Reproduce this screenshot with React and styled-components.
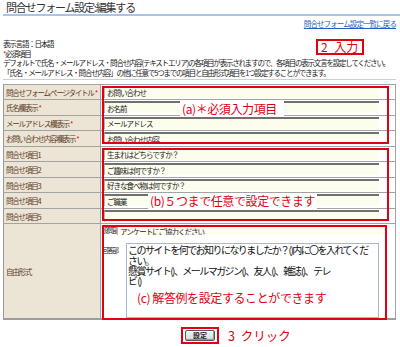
import React from 'react'
import styled, { createGlobalStyle } from 'styled-components'

const GlobalStyle = createGlobalStyle`
  html, body {
    margin: 0;
    padding: 0;
    background: #fff;
  }
  body {
    font-family: "Noto Sans CJK JP", "Noto Sans", sans-serif;
    color: #222;
  }
`

const Page = styled.div`
  position: relative;
  width: 400px;
  height: 347px;
  overflow: hidden;
`

const Header = styled.div`
  margin-left: 3px;
  padding-left: 3px;
  height: 14px;
  border-bottom: 2px solid #a9c4ea;
`

const Title = styled.h1`
  margin: 0;
  font-size: 11px;
  font-weight: normal;
  line-height: 14px;
  letter-spacing: -1.2px;
  color: #333;
`

const LinkRow = styled.div`
  margin-top: 3px;
  padding-right: 4px;
  height: 10px;
  text-align: right;
  font-size: 7.5px;
  line-height: 10px;
`

const BackLink = styled.a`
  letter-spacing: -0.9px;
  color: #2a5bc4;
  text-decoration: underline;
`

const Intro = styled.div`
  margin-top: 10px;
  padding-left: 3px;
`

const Line = styled.div`
  height: 9.7px;
  font-size: 7.5px;
  line-height: 9.7px;
  letter-spacing: -1.2px;
  white-space: nowrap;
  color: #222;
`

const Req = styled.span`
  color: #e00;
`

const Table = styled.div`
  margin: 1px 4px 0 3px;
  padding-top: 4px;
  border-top: 1px solid #cfcfcf;
`

const Row = styled.div`
  display: grid;
  grid-template-columns: 98px 1fr;
  height: ${p => p.$tall ? '97px' : '15.5px'};
  box-sizing: border-box;
  border-top: 1px solid #a3a3a3;
  border-right: 1px solid #a3a3a3;
  border-bottom: ${p => p.$last ? '2px solid #9c9c9c' : 'none'};
`

const Label = styled.div`
  display: flex;
  align-items: center;
  padding-left: 2px;
  background: #ece5d6;
  border-left: 1px solid #999;
  border-right: 1px solid #a3a3a3;
  font-size: 7.5px;
  letter-spacing: -1.2px;
  color: #5b3a1f;
  white-space: nowrap;
`

const Star = styled.span`
  color: #e00;
  margin-left: 1px;
`

const Value = styled.div`
  display: flex;
  align-items: flex-start;
  padding: 1px 0 0 3px;
`

const Field = styled.input`
  box-sizing: border-box;
  width: ${p => p.$w || 275}px;
  height: ${p => p.$h || 12}px;
  margin: 0;
  padding: 0 2px;
  border: none;
  border-top: 2px solid #707070;
  border-left: 1px solid #b5b5b5;
  background: #fdfdee;
  font-family: inherit;
  font-size: 7.5px;
  letter-spacing: -1px;
  color: #222;
  outline: none;
`

const FreeCell = styled.div`
  display: flex;
  flex-direction: column;
  padding: 1px 0 0 1px;
`

const SubRow = styled.div`
  display: flex;
  align-items: flex-start;
  margin-top: ${p => p.$gap || 0}px;
`

const SubLabel = styled.span`
  width: ${p => p.$w}px;
  padding-top: ${p => p.$pt || 0}px;
  font-size: 6.5px;
  letter-spacing: -1.2px;
  line-height: 10px;
  color: #222;
  white-space: nowrap;
`

const AnswerBox = styled.div`
  box-sizing: border-box;
  width: 253px;
  height: 75px;
  padding: 1px 1px;
  border: 1px solid #a7b9d0;
  background: #fff;
  font-size: 10px;
  line-height: 10.3px;
  letter-spacing: -1.55px;
  color: #111;
  white-space: nowrap;
  overflow: hidden;
`

const AnswerLine = styled.div`
  height: 10.3px;
`

const Footer = styled.div`
  display: grid;
  grid-template-columns: 1fr auto 1fr;
  align-items: center;
  margin-top: 7px;
`

const ButtonFrame = styled.div`
  grid-column: 2;
  display: flex;
  padding: 1px 2px;
  border: 2px solid #e0000f;
`

const SubmitButton = styled.button`
  width: 30px;
  height: 11px;
  padding: 0;
  border: 1px solid #5a5a5a;
  border-radius: 2px;
  background: linear-gradient(#f6f6f6, #d6d6d6);
  box-shadow: inset -1px -1px 0 #9a9a9a;
  font-family: inherit;
  font-size: 7px;
  font-weight: bold;
  line-height: 9px;
  color: #222;
`

const ClickNote = styled.span`
  margin-left: 9px;
  font-size: 12.5px;
  line-height: 15px;
  word-spacing: 3px;
  color: #e0000f;
`

const Callout = styled.div`
  position: absolute;
  left: ${p => p.$x}px;
  top: ${p => p.$y}px;
  width: ${p => p.$w}px;
  height: ${p => p.$h}px;
  box-sizing: border-box;
  border: 2px solid #e0000f;
  pointer-events: none;
`

const Note = styled.div`
  position: absolute;
  left: ${p => p.$x}px;
  top: ${p => p.$y}px;
  padding: 0 ${p => p.$pad || 0}px 0 2px;
  background: ${p => p.$bg ? '#fff' : 'transparent'};
  font-size: 12px;
  line-height: 16px;
  letter-spacing: -0.4px;
  color: #e0000f;
  white-space: nowrap;
`

const StepBadge = styled.div`
  position: absolute;
  left: 316px;
  top: 39px;
  width: 48px;
  height: 16px;
  box-sizing: border-box;
  border: 2px solid #e0000f;
  background: #fff;
  font-size: 12px;
  line-height: 12px;
  padding-left: 3px;
  word-spacing: 4px;
  color: #e0000f;
  white-space: nowrap;
`

const required = [
  ['問合せフォームページタイトル', 'お問い合わせ'],
  ['氏名欄表示', 'お名前'],
  ['メールアドレス欄表示', 'メールアドレス'],
  ['お問い合わせ内容欄表示', 'お問い合わせ内容'],
]

const optional = [
  ['問合せ項目1', '生まれはどちらですか？'],
  ['問合せ項目2', 'ご趣味は何ですか？'],
  ['問合せ項目3', '好きな食べ物は何ですか？'],
  ['問合せ項目4', 'ご職業'],
  ['問合せ項目5', ''],
]

const answerLines = [
  'このサイトを何でお知りになりましたか？()内に〇を入れてくだ',
  'さい。',
  '懸賞サイト()、メールマガジン()、友人 ()、雑誌 ()、テレ',
  'ビ ()',
]

const App = () => {
  return (
    <>
      <GlobalStyle />
      <Page>
        <Header>
          <Title>問合せフォーム設定:編集する</Title>
        </Header>
        <LinkRow>
          <BackLink href="#">問合せフォーム設定一覧に戻る</BackLink>
        </LinkRow>

        <Intro>
          <Line>表示言語：日本語</Line>
          <Line><Req>*</Req>必須項目</Line>
          <Line>デフォルトで氏名・メールアドレス・問合せ内容(テキストエリア)の各項目が表示されますので、各項目の表示文言を設定してください。</Line>
          <Line>「氏名・メールアドレス・問合せ内容」の他に任意で5つまでの項目と自由形式項目を1つ設定することができます。</Line>
        </Intro>

        <Table>
          {required.map(([label, value]) => (
            <Row key={label}>
              <Label>{label}<Star>*</Star></Label>
              <Value><Field defaultValue={value} /></Value>
            </Row>
          ))}
          {optional.map(([label, value]) => (
            <Row key={label}>
              <Label>{label}</Label>
              <Value><Field defaultValue={value} /></Value>
            </Row>
          ))}
          <Row $tall $last>
            <Label>自由形式</Label>
            <FreeCell>
              <SubRow>
                <SubLabel $w={15}>設問部</SubLabel>
                <Field $w={266} $h={10} defaultValue="アンケートにご協力ください" />
              </SubRow>
              <SubRow $gap={8}>
                <SubLabel $w={24} $pt={2}>回答部</SubLabel>
                <AnswerBox>
                  {answerLines.map(l => <AnswerLine key={l}>{l}</AnswerLine>)}
                </AnswerBox>
              </SubRow>
            </FreeCell>
          </Row>
        </Table>

        <Footer>
          <ButtonFrame>
            <SubmitButton>設定</SubmitButton>
          </ButtonFrame>
          <ClickNote>3 クリック</ClickNote>
        </Footer>

        {/* annotations drawn over the form */}
        <StepBadge>2 入力</StepBadge>
        <Callout $x={102} $y={86} $w={287} $h={58} />
        <Callout $x={102} $y={148} $w={287} $h={73} />
        <Callout $x={102} $y={225} $w={285} $h={95} />
        <Note $x={180} $y={101} $pad={7} $bg>(a)＊必須入力項目</Note>
        <Note $x={148} $y={193} $pad={2} $bg>(b)５つまで任意で設定できます</Note>
        <Note $x={135} $y={290}>(c) 解答例を設定することができます</Note>
      </Page>
    </>
  )
}

export default App
